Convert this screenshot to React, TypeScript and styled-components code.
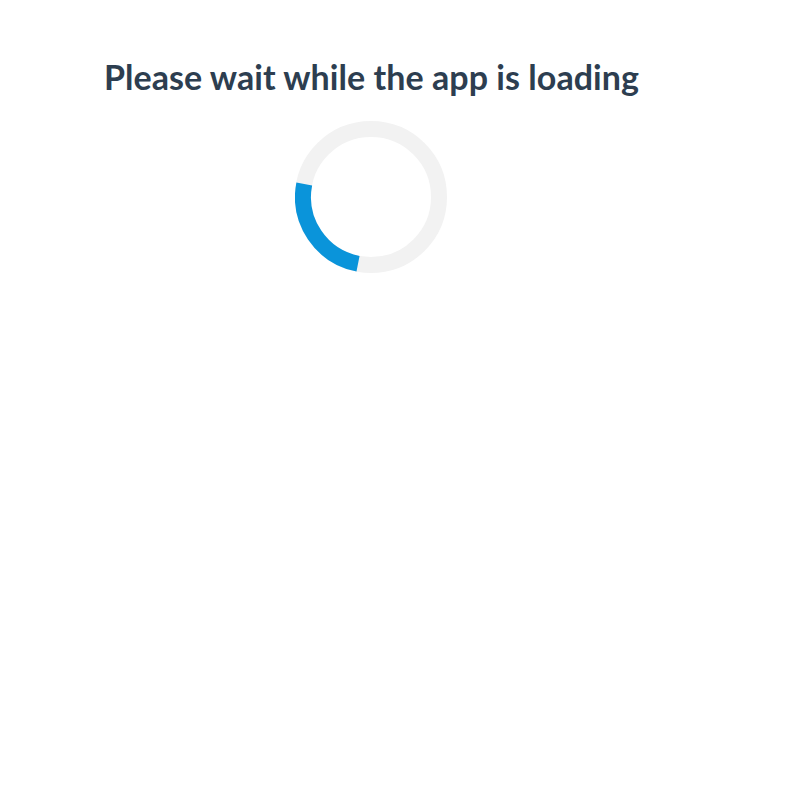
import React from "react";
import styled, { createGlobalStyle } from "styled-components";

const GlobalStyle = createGlobalStyle`
  html, body {
    margin: 0;
    padding: 0;
    background: #fff;
  }
`;

const Page = styled.div`
  padding: 56px 0 0 104px;
`;

const Loader = styled.div`
  display: inline-flex;
  flex-direction: column;
  align-items: center;
`;

const Title = styled.h1`
  margin: 0;
  font-family: "Lato", "Noto Sans", sans-serif;
  font-size: 34px;
  font-weight: 700;
  letter-spacing: 0.05px;
  line-height: 42px;
  color: #2d3e50;
`;

const Spinner = styled.svg`
  display: block;
  margin-top: 23px;
  width: 152px;
  height: 152px;
`;

const SIZE = 152;
const STROKE = 16;
const R = (SIZE - STROKE) / 2;
const C = SIZE / 2;

const point = (deg: number) => {
  const a = (deg * Math.PI) / 180;
  return `${C + R * Math.cos(a)} ${C + R * Math.sin(a)}`;
};

export default function App() {
  return (
    <>
      <GlobalStyle />
      <Page>
        <Loader>
          <Title>Please wait while the app is loading</Title>
          <Spinner viewBox={`0 0 ${SIZE} ${SIZE}`}>
            <circle cx={C} cy={C} r={R} fill="none" stroke="#f2f2f2" strokeWidth={STROKE} />
            <path
              d={`M ${point(101)} A ${R} ${R} 0 0 1 ${point(191)}`}
              fill="none"
              stroke="#0a94da"
              strokeWidth={STROKE}
            />
          </Spinner>
        </Loader>
      </Page>
    </>
  );
}
